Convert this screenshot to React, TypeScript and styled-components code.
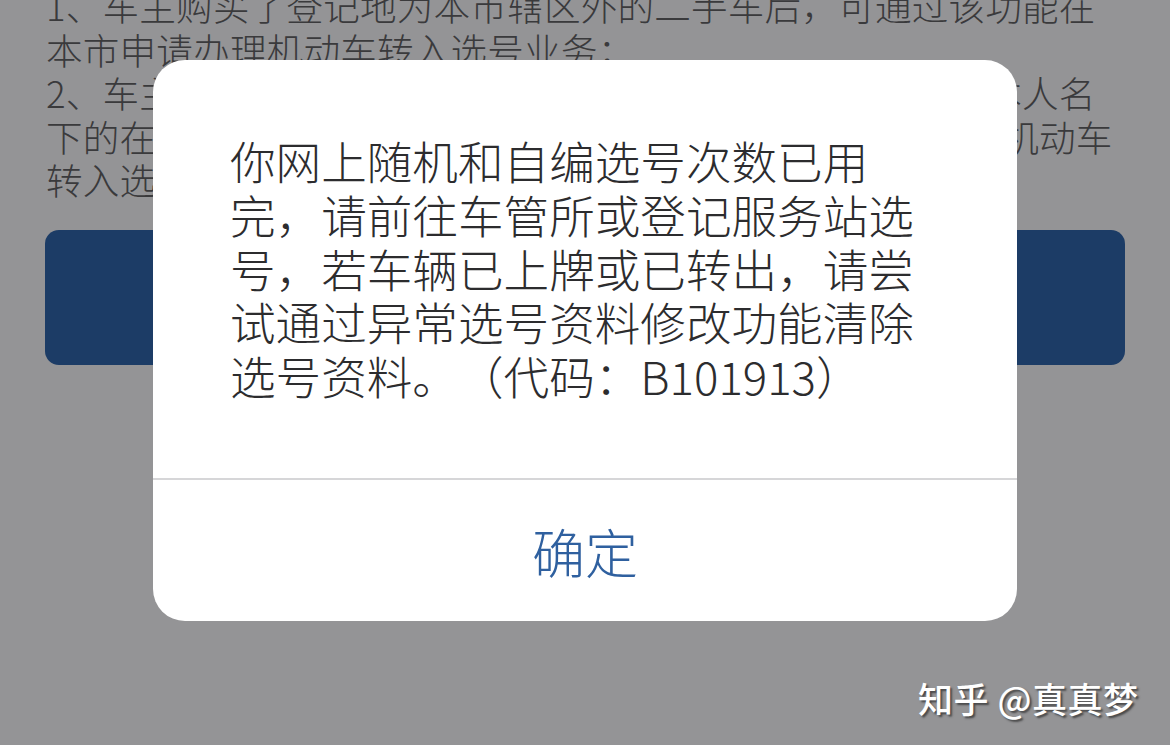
import React from "react";
import styled, { createGlobalStyle } from "styled-components";

const GlobalStyle = createGlobalStyle`
  html, body {
    margin: 0;
    padding: 0;
    background: #949496;
  }
  body {
    font-family: "Noto Sans CJK SC", "Noto Sans", sans-serif;
  }
`;

const Screen = styled.div`
  position: relative;
  width: 1170px;
  height: 745px;
  overflow: hidden;
  background: #949496;
`;

const Notice = styled.div`
  margin-top: -16px;
  padding: 0 0 0 46px;
  color: #3a3a3c;
  font-size: 36.6px;
  font-weight: 300;
  line-height: 43.5px;
  letter-spacing: 0.2px;
  text-spacing-trim: space-all;
`;

const NoticeLine = styled.div`
  white-space: nowrap;
`;

const SubmitButton = styled.div`
  margin: 28px 45px 0;
  height: 135px;
  border-radius: 14px;
  background: #1c3c66;
`;

const Dialog = styled.div`
  position: absolute;
  left: 153px;
  top: 60px;
  width: 864px;
  height: 561px;
  background: #ffffff;
  border-radius: 32px;
  display: flex;
  flex-direction: column;
  overflow: hidden;
`;

const Message = styled.div`
  flex: 1;
  padding: 74px 77px 0;
  color: #2c2c2e;
  font-size: 45.6px;
  font-weight: 300;
  line-height: 53.8px;
  white-space: nowrap;
  text-spacing-trim: space-all;
`;

const Divider = styled.div`
  height: 2px;
  background: #d6d6d8;
`;

const ConfirmButton = styled.div`
  height: 141px;
  display: flex;
  align-items: center;
  justify-content: center;
  color: #2f609f;
  font-size: 53px;
  font-weight: 300;
`;

const Watermark = styled.div`
  position: absolute;
  left: 918px;
  top: 672px;
  color: #ffffff;
  font-size: 35px;
  font-weight: 500;
  letter-spacing: 0.5px;
  white-space: nowrap;
  text-shadow: 2px 2px 2px rgba(40, 40, 40, 0.7);
`;

const noticeLines = [
  "1、车主购买了登记地为本市辖区外的二手车后，可通过该功能在",
  "本市申请办理机动车转入选号业务；",
  "2、车主购买了登记地为本市辖区外的二手车且已经登记在本人名",
  "下的在用外地号牌车辆，可直接通过该功能在本市申请办理机动车",
  "转入选号业务。",
];

const messageLines = [
  "你网上随机和自编选号次数已用",
  "完，请前往车管所或登记服务站选",
  "号，若车辆已上牌或已转出，请尝",
  "试通过异常选号资料修改功能清除",
  "选号资料。（代码：B101913）",
];

const App = () => {
  return (
    <Screen>
      <GlobalStyle />
      <Notice>
        {noticeLines.map((line) => (
          <NoticeLine key={line}>{line}</NoticeLine>
        ))}
      </Notice>
      <SubmitButton />

      <Dialog>
        <Message>
          {messageLines.map((line) => (
            <div key={line}>{line}</div>
          ))}
        </Message>
        <Divider />
        <ConfirmButton>确定</ConfirmButton>
      </Dialog>

      <Watermark>知乎 @真真梦</Watermark>
    </Screen>
  );
};

export default App;
